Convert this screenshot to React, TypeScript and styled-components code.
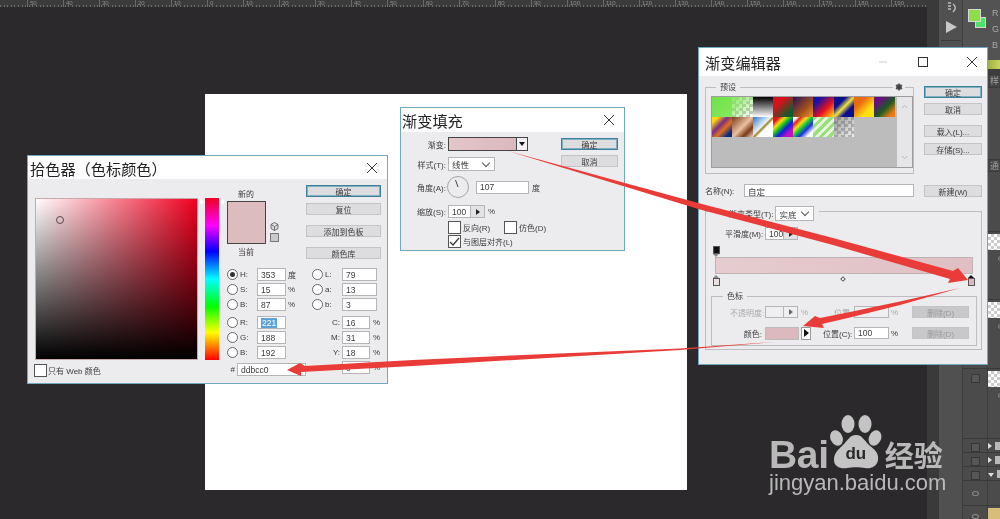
import React from 'react';
import styled, { createGlobalStyle } from 'styled-components';
import { ChevronDown, ChevronUp, Settings } from 'lucide-react';

const GlobalStyle = createGlobalStyle`
  html, body { margin: 0; padding: 0; background: #2b292b; }
  body { width: 1000px; height: 519px; overflow: hidden; font-family: "Liberation Sans", "Noto Sans CJK SC", sans-serif; }
  * { box-sizing: border-box; }
`;

const Screen = styled.div`
  position: relative;
  display: flex;
  width: 1000px;
  height: 519px;
  overflow: hidden;
  background: #2b292b;
  color: #3c3a3c;
  font-size: 8px;
  filter: blur(.35px);
`;

const Workspace = styled.div`
  flex: none;
  width: 927px;
`;

const Ruler = styled.div`
  display: flex;
  height: 7px;
  padding-left: 27px;
  background-color: #3c3b3c;
  background-image: repeating-linear-gradient(90deg, #6a6a6a 0 1px, transparent 1px 3.6px);
  background-size: 100% 2px;
  background-position: 0 100%;
  background-repeat: no-repeat;
`;

const RulerCell = styled.div`
  flex: none;
  width: 36px;
  padding-left: 2px;
  border-left: 1px solid #6a6a6a;
  color: #8d8d8d;
  font-size: 6px;
  line-height: 6px;
`;

const Gutter = styled.div`
  flex: none;
  width: 12px;
  background: #3b3a3b;
`;

const ToolStrip = styled.div`
  flex: none;
  width: 24px;
  display: flex;
  flex-direction: column;
  align-items: center;
  gap: 6px;
  padding-top: 2px;
  background: #505050;
  border-right: 1px solid #3d3d3d;
`;

const StripDivider = styled.div`
  width: 20px;
  height: 1px;
  background: #3d3d3d;
`;

const SidePanel = styled.div`
  flex: 1;
  display: flex;
  flex-direction: column;
  background: #4b4b4b;
  overflow: hidden;
`;

const ColorPanel = styled.div`
  position: relative;
  flex: none;
  height: 60px;
  background: #535353;
`;

const ChannelLabel = styled.span<{ $top: number }>`
  position: absolute;
  left: 29px;
  top: ${p => p.$top}px;
  color: #a8a8a8;
  font-size: 9px;
`;

const ColorChip = styled.div<{ $bg: string; $left: number; $top: number; $size: number; $z: number }>`
  position: absolute;
  left: ${p => p.$left}px;
  top: ${p => p.$top}px;
  width: ${p => p.$size}px;
  height: ${p => p.$size}px;
  background: ${p => p.$bg};
  border: 1px solid #d8d8d8;
  z-index: ${p => p.$z};
`;

const Spectrum = styled.div`
  flex: none;
  height: 9px;
  background: linear-gradient(90deg, #44601a, #c9d75a);
`;

const PanelRow = styled.div<{ $h: number; $bg?: string }>`
  flex: none;
  height: ${p => p.$h}px;
  display: flex;
  align-items: flex-start;
  background: ${p => p.$bg || '#4b4b4b'};
  border-bottom: 1px solid #3a3a3a;
  color: #b5b5b5;
`;

const TabText = styled.span`
  margin-left: 27px;
  color: #a0a0a0;
  font-size: 9px;
  line-height: 12px;
`;

const VisCell = styled.div<{ $pad?: number }>`
  flex: none;
  width: 25px;
  height: 100%;
  display: flex;
  justify-content: center;
  padding-top: ${p => p.$pad ?? 4}px;
  border-right: 1px solid #3e3e3e;
`;

const VisBox = styled.div`
  width: 9px;
  height: 9px;
  border: 1px solid #363636;
  background: #565656;
`;

const Eye = styled.div`
  width: 7px;
  height: 5px;
  border-radius: 50%;
  border: 1px solid #8a8a8a;
`;

const ThumbStack = styled.div`
  flex: none;
  display: flex;
  flex-direction: column;
`;

const Thumb = styled.div<{ $fill?: string }>`
  width: 20px;
  height: 16px;
  margin-top: 2px;
  background-color: ${p => p.$fill || '#fff'};
  background-image: ${p => (p.$fill ? 'none' : 'conic-gradient(#ccc 25%, #fff 0 50%, #ccc 0 75%, #fff 0)')};
  background-size: 6px 6px;
`;

const ThumbEye = styled(Eye)`
  margin: 6px 0 0 10px;
`;

const Fold = styled.span<{ $open?: boolean }>`
  width: 0;
  height: 0;
  ${p => p.$open
    ? 'border-left: 3px solid transparent; border-right: 3px solid transparent; border-top: 4px solid #ddd; margin: 6px 0 0 0;'
    : 'border-top: 3px solid transparent; border-bottom: 3px solid transparent; border-left: 4px solid #ddd; margin: 4px 0 0 0;'}
`;

const Folder = styled.span`
  width: 7px;
  height: 8px;
  margin: 3px 0 0 3px;
  background: #b9b9b9;
`;

const Desktop = styled.div`
  position: absolute;
  inset: 0;
`;

const Canvas = styled.div`
  position: absolute;
  left: 205px;
  top: 94px;
  width: 482px;
  height: 396px;
  background: #fff;
`;

const Win = styled.div<{ $x: number; $y: number; $w: number; $h: number }>`
  position: absolute;
  left: ${p => p.$x}px;
  top: ${p => p.$y}px;
  width: ${p => p.$w}px;
  height: ${p => p.$h}px;
  display: flex;
  flex-direction: column;
  background: #ecebed;
  border: 1px solid #6fa9bd;
`;

const TitleBar = styled.div<{ $h: number }>`
  flex: none;
  height: ${p => p.$h}px;
  display: flex;
  align-items: center;
  background: #fff;
  padding-right: 10px;
`;

const TitleText = styled.div<{ $pad: number }>`
  flex: 1;
  padding-left: ${p => p.$pad}px;
  font-size: 15.2px;
  color: #222;
  white-space: nowrap;
`;

const WinGlyph = styled.svg<{ $mr?: number }>`
  display: block;
  flex: none;
  margin-right: ${p => p.$mr || 0}px;
`;

const Btn = styled.div<{ $w: number; $primary?: boolean; $mt?: number; $off?: boolean }>`
  flex: none;
  width: ${p => p.$w}px;
  height: 12px;
  margin-top: ${p => p.$mt || 0}px;
  display: flex;
  align-items: center;
  justify-content: center;
  background: ${p => (p.$off ? '#c8c7c9' : '#dddcde')};
  border: 1px solid ${p => (p.$primary ? '#3f7f9c' : '#c4c3c5')};
  box-shadow: ${p => (p.$primary ? 'inset 0 0 0 1px #7fb0c4' : 'none')};
  color: ${p => (p.$off ? '#9a999b' : '#3c3a3c')};
  font-size: 8px;
  white-space: nowrap;
`;

const Input = styled.div<{ $w: number; $h?: number; $off?: boolean; $ml?: number }>`
  flex: none;
  width: ${p => p.$w}px;
  height: ${p => p.$h || 13}px;
  margin-left: ${p => p.$ml || 0}px;
  padding-left: 3px;
  display: flex;
  align-items: center;
  background: ${p => (p.$off ? '#efeef0' : '#fff')};
  border: 1px solid #b5b4b6;
  font-size: 8.5px;
  color: #3c3a3c;
  white-space: nowrap;
  overflow: hidden;
`;

const Stepper = styled.div<{ $h?: number; $off?: boolean }>`
  flex: none;
  width: 14px;
  height: ${p => p.$h || 13}px;
  display: flex;
  align-items: center;
  justify-content: center;
  background: ${p => (p.$off ? '#efeef0' : '#e2e1e3')};
  border: 1px solid #b5b4b6;
  border-left: none;
  &::after {
    content: '';
    border-top: 3px solid transparent;
    border-bottom: 3px solid transparent;
    border-left: 4px solid ${p => (p.$off ? '#666' : '#222')};
  }
`;

const Select = styled(Input)`
  justify-content: space-between;
  padding-right: 5px;
  &::after {
    content: '';
    width: 5px;
    height: 5px;
    margin-top: -3px;
    border-right: 1px solid #555;
    border-bottom: 1px solid #555;
    transform: rotate(45deg);
  }
`;

const Label = styled.div<{ $w?: number; $right?: boolean; $off?: boolean; $ml?: number }>`
  flex: none;
  ${p => (p.$w ? `width: ${p.$w}px;` : '')}
  margin-left: ${p => p.$ml || 0}px;
  text-align: ${p => (p.$right ? 'right' : 'left')};
  color: ${p => (p.$off ? '#a9a8aa' : '#3c3a3c')};
  font-size: 8px;
  white-space: nowrap;
`;

const Check = styled.div<{ $ml?: number }>`
  flex: none;
  width: 13px;
  height: 13px;
  margin-left: ${p => p.$ml || 0}px;
  background: #fff;
  border: 1px solid #555;
  display: flex;
  align-items: center;
  justify-content: center;
`;

/* colour picker */
const PickerBody = styled.div`
  flex: 1;
  display: flex;
  padding: 6px 0 0 7px;
`;

const FieldColumn = styled.div`
  flex: none;
  width: 163px;
  padding-top: 13px;
`;

const ColorField = styled.div`
  position: relative;
  width: 163px;
  height: 162px;
  border: 1px solid #c9a8ac;
  background:
    linear-gradient(to top, #000, rgba(0, 0, 0, 0)),
    linear-gradient(to right, #fff, #f0001f);
`;

const PickRing = styled.div`
  position: absolute;
  left: 20px;
  top: 17px;
  width: 8px;
  height: 8px;
  border-radius: 50%;
  border: 1px solid #5a4a4c;
`;

const WebRow = styled.div`
  display: flex;
  align-items: center;
  gap: 1px;
  margin: 4px 0 0 -1px;
`;

const HueColumn = styled.div`
  position: relative;
  flex: none;
  margin: 13px 0 0 7px;
  width: 14px;
  height: 162px;
  background: linear-gradient(to bottom, #f0001f 0%, #ff00ff 17%, #0000ff 33%, #00ffff 50%, #00ff00 67%, #ffff00 83%, #ff0000 100%);
  &::before, &::after {
    content: '';
    position: absolute;
    top: 1px;
    border-top: 3px solid transparent;
    border-bottom: 3px solid transparent;
  }
  &::before { left: -5px; border-left: 4px solid #fff; }
  &::after { right: -5px; border-right: 4px solid #fff; }
`;

const RightColumn = styled.div`
  flex: 1;
  margin-left: 7px;
  display: flex;
  flex-direction: column;
`;

const TopArea = styled.div`
  flex: none;
  height: 81px;
  display: flex;
`;

const SwatchColumn = styled.div`
  flex: none;
  width: 40px;
  display: flex;
  flex-direction: column;
  align-items: center;
  padding-top: 3px;
`;

const ColorSwatch = styled.div`
  width: 39px;
  height: 43px;
  margin: 2px 0;
  background: #ddbcc0;
  border: 1px solid #444;
`;

const GamutColumn = styled.div`
  flex: none;
  width: 40px;
  padding: 37px 0 0 4px;
`;

const WebSwatch = styled.div`
  width: 9px;
  height: 9px;
  margin-top: 2px;
  background: #c9c8ca;
  border: 1px solid #777;
`;

const ButtonColumn = styled.div`
  display: flex;
  flex-direction: column;
  align-items: flex-start;
`;

const ValueGrid = styled.div`
  display: grid;
  grid-template-columns: 85px 70px;
`;

const ValueColumn = styled.div`
  display: flex;
  flex-direction: column;
`;

const ValueRow = styled.div<{ $mt?: number }>`
  display: flex;
  align-items: center;
  height: 13px;
  margin-top: ${p => p.$mt ?? 2}px;
`;

const Radio = styled.div<{ $on?: boolean }>`
  flex: none;
  width: 11px;
  height: 11px;
  margin-left: 1px;
  border-radius: 50%;
  background: #fff;
  border: 1px solid #666;
  display: flex;
  align-items: center;
  justify-content: center;
  &::after {
    content: '';
    width: 5px;
    height: 5px;
    border-radius: 50%;
    background: ${p => (p.$on ? '#333' : 'transparent')};
  }
`;

const Selected = styled.span`
  background: #5aa2dc;
  color: #fff;
  padding: 0 1px;
`;

/* gradient fill */
const FillBody = styled.div`
  flex: 1;
  display: flex;
  padding: 5px 6px 0 0;
`;

const FillForm = styled.div`
  flex: 1;
  display: flex;
  flex-direction: column;
`;

const FormRow = styled.div<{ $mt?: number; $h?: number; $indent?: number }>`
  display: flex;
  align-items: center;
  height: ${p => p.$h || 13}px;
  margin-top: ${p => p.$mt || 0}px;
  padding-left: ${p => p.$indent || 0}px;
`;

const GradientChip = styled.div`
  flex: none;
  width: 69px;
  height: 14px;
  margin-left: 2px;
  background: linear-gradient(90deg, #e2c6ca, #dcb8bd);
  border: 1px solid #444;
`;

const ChipMenu = styled.div`
  flex: none;
  width: 11px;
  height: 14px;
  background: #f2f1f3;
  border: 1px solid #444;
  border-left: none;
  display: flex;
  align-items: center;
  justify-content: center;
  &::after {
    content: '';
    border-left: 3px solid transparent;
    border-right: 3px solid transparent;
    border-top: 4px solid #111;
  }
`;

const Dial = styled.svg`
  flex: none;
  display: block;
  margin-right: 6px;
`;

const SideButtons = styled.div`
  flex: none;
  display: flex;
  flex-direction: column;
  align-items: flex-start;
  padding-top: 1px;
`;

/* gradient editor */
const EditorBody = styled.div`
  flex: 1;
  display: flex;
  flex-direction: column;
  padding: 11px 6px 0 6px;
`;

const EditorTop = styled.div`
  display: flex;
  gap: 10px;
`;

const PresetFrame = styled.div`
  position: relative;
  width: 209px;
  height: 87px;
  border: 1px solid #bdbcbe;
`;

const Legend = styled.div<{ $x: number }>`
  position: absolute;
  left: ${p => p.$x}px;
  top: -6px;
  padding: 0 4px;
  background: #ecebed;
  font-size: 8px;
  line-height: 11px;
  white-space: nowrap;
`;

const Gear = styled.div`
  position: absolute;
  right: 8px;
  top: -5px;
  display: flex;
  padding: 0 2px;
  background: #ecebed;
  color: #444;
`;

const PresetInner = styled.div`
  display: flex;
  margin: 8px 0 0 5px;
  height: 72px;
  border: 1px solid #9c9b9d;
`;

const PresetGrid = styled.div`
  flex: none;
  width: 185px;
  height: 70px;
  display: grid;
  grid-template-columns: repeat(9, 20.3px);
  grid-auto-rows: 20px;
  align-content: start;
  background: #bdbcbd;
`;

const Preset = styled.div<{ $bg: string }>`
  background: ${p => p.$bg};
  background-size: ${p => (p.$bg.includes('conic') ? '100% 100%, 7px 7px' : 'auto')};
`;

const ScrollTrack = styled.div`
  flex: 1;
  display: flex;
  flex-direction: column;
  justify-content: space-between;
  align-items: center;
  padding: 5px 0;
  background: #e6e5e7;
  color: #aaa;
`;

const EditorSide = styled.div`
  display: flex;
  flex-direction: column;
  margin-top: -1px;
`;

const NameRow = styled.div`
  display: flex;
  align-items: center;
  margin-top: 10px;
`;

const TypeFrame = styled.div`
  position: relative;
  margin-top: 14px;
  width: 277px;
  height: 139px;
  border: 1px solid #bdbcbe;
`;

const TypeLegend = styled.div`
  position: absolute;
  left: 23px;
  top: -6px;
  display: flex;
  align-items: center;
  gap: 0;
  padding-right: 5px;
  background: #ecebed;
`;

const SmoothRow = styled.div`
  display: flex;
  align-items: center;
  margin: 15px 0 0 19px;
`;

const StopTrack = styled.div`
  position: relative;
  margin: 6px 8px 0 9px;
  height: 40px;
`;

const GradientBar = styled.div`
  position: absolute;
  left: 0;
  right: 0;
  top: 11px;
  height: 17px;
  background: linear-gradient(90deg, #e6ccd0, #dfbfc4);
  border: 1px solid #bdb3b5;
`;

const Stop = styled.div<{ $at: string; $top: number; $fill: string; $mark?: string; $up?: boolean }>`
  position: absolute;
  ${p => p.$at};
  top: ${p => p.$top}px;
  width: 7px;
  height: 8px;
  background: ${p => p.$fill};
  border: 1px solid #555;
  &::before {
    content: '';
    position: absolute;
    left: -1px;
    ${p => (p.$up ? 'bottom: -4px; border-top: 3px solid #888;' : `top: -4px; border-bottom: 3px solid ${p.$mark || '#888'};`)}
    border-left: 3.5px solid transparent;
    border-right: 3.5px solid transparent;
  }
`;

const MidPoint = styled.div`
  position: absolute;
  left: 126px;
  top: 31px;
  width: 4px;
  height: 4px;
  border: 1px solid #555;
  background: #fff;
  transform: rotate(45deg);
`;

const StopsFrame = styled.div`
  position: relative;
  margin: 10px 4px 0 5px;
  height: 50px;
  border: 1px solid #bdbcbe;
  padding: 9px 0 0 18px;
`;

const StopRow = styled.div<{ $mt?: number }>`
  display: flex;
  align-items: center;
  height: 12px;
  margin-top: ${p => p.$mt || 0}px;
`;

const ColorWell = styled.div`
  flex: none;
  width: 34px;
  height: 13px;
  margin-left: 3px;
  background: #dcb9be;
  border: 1px solid #bbb;
`;

const WellMenu = styled.div`
  flex: none;
  width: 10px;
  height: 13px;
  margin-left: 2px;
  background: #fff;
  border: 1px solid #999;
  display: flex;
  align-items: center;
  justify-content: center;
  &::after {
    content: '';
    border-top: 4px solid transparent;
    border-bottom: 4px solid transparent;
    border-left: 5px solid #111;
  }
`;

/* overlays */
const Arrows = styled.svg`
  position: absolute;
  left: 0;
  top: 0;
  width: 1000px;
  height: 519px;
  pointer-events: none;
`;

const Watermark = styled.div`
  position: absolute;
  left: 769px;
  top: 412px;
  width: 190px;
  color: rgba(196, 196, 196, .92);
`;

const BrandRow = styled.div`
  display: flex;
  align-items: flex-end;
  height: 58px;
`;

const BrandLatin = styled.div`
  font-weight: 700;
  font-size: 39px;
  line-height: 30px;
  letter-spacing: -.3px;
`;

const Paw = styled.div`
  position: relative;
  flex: none;
  width: 54px;
  height: 58px;
`;

const PawText = styled.div`
  position: absolute;
  left: 13px;
  top: 33px;
  width: 28px;
  text-align: center;
  color: #2b292b;
  font-weight: 700;
  font-size: 17px;
  line-height: 18px;
`;

const BrandCn = styled.div`
  margin-left: 2px;
  font-family: "Noto Sans CJK SC", sans-serif;
  font-weight: 700;
  font-size: 29px;
  line-height: 32px;
`;

const BrandUrl = styled.div`
  margin-top: 2px;
  font-size: 22px;
  line-height: 22px;
  white-space: nowrap;
`;

const checker = 'conic-gradient(#c4c4c4 25%, #fff 0 50%, #c4c4c4 0 75%, #fff 0)';

const presets = [
  'linear-gradient(135deg, #6fe04a, #86ea5c)',
  `linear-gradient(135deg, rgba(130,230,90,.95), rgba(130,230,90,0)), ${checker}`,
  'linear-gradient(180deg, #000, #fff)',
  'linear-gradient(135deg, #d8101c 30%, #15592c 80%)',
  'linear-gradient(135deg, #2a0f5e, #a0501a 60%, #f09a30)',
  'linear-gradient(135deg, #1810a8 20%, #e8101c 60%, #ffe810)',
  'linear-gradient(135deg, #0a0f90 30%, #f0e040 50%, #0a0f90 70%)',
  'linear-gradient(135deg, #ea6a10 30%, #ffe210 70%)',
  'linear-gradient(135deg, #6a0f80 20%, #1a5a20 55%, #f07a10 85%)',
  'linear-gradient(135deg, #ffd410 15%, #7a2f80 40%, #e07020 60%, #0a2a80 85%)',
  'linear-gradient(135deg, #7a3a18, #eac0a0 50%, #7a3a18 75%, #e8d8c8)',
  'linear-gradient(135deg, #2a78c8, #e8f0f8 45%, #a08020 52%, #fff 60%)',
  'linear-gradient(135deg, #e8101c 15%, #f0e010 30%, #10c020 45%, #1020e0 60%, #c010c0 80%)',
  'linear-gradient(135deg, #fff 10%, #e82020 20%, #f0e010 35%, #10c040 50%, #2030e0 65%, #fff 85%)',
  'repeating-linear-gradient(135deg, #9adf78 0 3px, #e4f4dc 3px 6px)',
  `linear-gradient(135deg, rgba(90,90,90,.6), rgba(90,90,90,.1)), ${checker}`,
];

const rulerMarks = [50, 40, 30, 20, 10, 0, 10, 20, 30, 40, 50, 60, 70, 80, 90, 100, 110, 120, 130, 140, 150, 160, 170, 180, 190];

const Close = () => (
  <WinGlyph width={10} height={10} viewBox="0 0 10 10">
    <path d="M0 0L10 10M10 0L0 10" stroke="#333" strokeWidth="1" />
  </WinGlyph>
);

const Tick = () => (
  <svg width="11" height="11" viewBox="0 0 11 11">
    <path d="M1 6L4 9L10 2" stroke="#333" strokeWidth="1.2" fill="none" />
  </svg>
);

const ColorPicker = () => (
  <Win $x={27} $y={155} $w={361} $h={229}>
    <TitleBar $h={23}>
      <TitleText $pad={2}>拾色器（色标颜色）</TitleText>
      <Close />
    </TitleBar>
    <PickerBody>
      <FieldColumn>
        <ColorField><PickRing /></ColorField>
        <WebRow>
          <Check />
          <Label>只有 Web 颜色</Label>
        </WebRow>
      </FieldColumn>
      <HueColumn />
      <RightColumn>
        <TopArea>
          <SwatchColumn>
            <Label>新的</Label>
            <ColorSwatch />
            <Label>当前</Label>
          </SwatchColumn>
          <GamutColumn>
            <svg width="9" height="9" viewBox="0 0 9 9" style={{ display: 'block' }}>
              <path d="M4.5.5L8 2.5V6.5L4.5 8.5L1 6.5V2.5ZM1 2.5L4.5 4.5L8 2.5M4.5 4.5V8.5" stroke="#555" fill="#ddd" strokeWidth=".8" />
            </svg>
            <WebSwatch />
          </GamutColumn>
          <ButtonColumn>
            <Btn $w={75} $primary>确定</Btn>
            <Btn $w={75} $mt={6}>复位</Btn>
            <Btn $w={75} $mt={10}>添加到色板</Btn>
            <Btn $w={75} $mt={10}>颜色库</Btn>
          </ButtonColumn>
        </TopArea>
        <ValueGrid>
          <ValueColumn>
            {[['H:', '353', '度'], ['S:', '15', '%'], ['B:', '87', '%']].map(([k, v, u], i) => (
              <ValueRow key={k}>
                <Radio $on={i === 0} />
                <Label $w={17} $ml={2}>{k}</Label>
                <Input $w={29}>{v}</Input>
                <Label $ml={2}>{u}</Label>
              </ValueRow>
            ))}
            <ValueRow $mt={5}>
              <Radio />
              <Label $w={17} $ml={2}>R:</Label>
              <Input $w={29}><Selected>221</Selected></Input>
            </ValueRow>
            {[['G:', '188'], ['B:', '192']].map(([k, v]) => (
              <ValueRow key={k}>
                <Radio />
                <Label $w={17} $ml={2}>{k}</Label>
                <Input $w={29}>{v}</Input>
              </ValueRow>
            ))}
            <ValueRow $mt={4}>
              <Label $w={9} $right>#</Label>
              <Input $w={69} $ml={2}>ddbcc0</Input>
            </ValueRow>
          </ValueColumn>
          <ValueColumn>
            {[['L:', '79'], ['a:', '13'], ['b:', '3']].map(([k, v]) => (
              <ValueRow key={k}>
                <Radio />
                <Label $w={17} $ml={2}>{k}</Label>
                <Input $w={35}>{v}</Input>
              </ValueRow>
            ))}
            {[['C:', '16'], ['M:', '31'], ['Y:', '18'], ['K:', '0']].map(([k, v], i) => (
              <ValueRow key={k} $mt={i === 0 ? 5 : 2}>
                <Label $w={29} $right>{k}</Label>
                <Input $w={28} $ml={2}>{v}</Input>
                <Label $ml={3}>%</Label>
              </ValueRow>
            ))}
          </ValueColumn>
        </ValueGrid>
      </RightColumn>
    </PickerBody>
  </Win>
);

const GradientFill = () => (
  <Win $x={400} $y={107} $w={225} $h={144}>
    <TitleBar $h={24}>
      <TitleText $pad={1}>渐变填充</TitleText>
      <Close />
    </TitleBar>
    <FillBody>
      <FillForm>
        <FormRow $h={14}>
          <Label $w={45} $right>渐变:</Label>
          <GradientChip />
          <ChipMenu />
        </FormRow>
        <FormRow $mt={6} $h={14}>
          <Label $w={45} $right>样式(T):</Label>
          <Select $w={47} $h={14} $ml={2}>线性</Select>
        </FormRow>
        <FormRow $mt={5} $h={22}>
          <Label $w={45} $right>角度(A):</Label>
          <Dial width="24" height="24" viewBox="0 0 24 24">
            <circle cx="12" cy="12" r="10.5" fill="#ecebed" stroke="#a5a4a6" />
            <path d="M12 12L9.5 5" stroke="#444" strokeWidth="1" />
          </Dial>
          <Input $w={53}>107</Input>
          <Label $ml={3}>度</Label>
        </FormRow>
        <FormRow $mt={7}>
          <Label $w={45} $right>缩放(S):</Label>
          <Input $w={23} $ml={2}>100</Input>
          <Stepper />
          <Label $ml={3}>%</Label>
        </FormRow>
        <FormRow $mt={3} $indent={47}>
          <Check />
          <Label $w={41} $ml={2}>反向(R)</Label>
          <Check />
          <Label $ml={2}>仿色(D)</Label>
        </FormRow>
        <FormRow $mt={1} $indent={47}>
          <Check><Tick /></Check>
          <Label $ml={2}>与图层对齐(L)</Label>
        </FormRow>
      </FillForm>
      <SideButtons>
        <Btn $w={57} $primary>确定</Btn>
        <Btn $w={57} $mt={5}>取消</Btn>
      </SideButtons>
    </FillBody>
  </Win>
);

const GradientEditor = () => (
  <Win $x={698} $y={47} $w={290} $h={318}>
    <TitleBar $h={28}>
      <TitleText $pad={6}>渐变编辑器</TitleText>
      <WinGlyph width="8" height="2" viewBox="0 0 8 2" $mr={31}>
        <path d="M0 1H8" stroke="#ccc" />
      </WinGlyph>
      <WinGlyph width="10" height="10" viewBox="0 0 10 10" $mr={39}>
        <rect x=".5" y=".5" width="9" height="9" fill="none" stroke="#333" />
      </WinGlyph>
      <Close />
    </TitleBar>
    <EditorBody>
      <EditorTop>
        <div>
          <PresetFrame>
            <Legend $x={10}>预设</Legend>
            <Gear><Settings size={8} fill="#444" strokeWidth={2} /></Gear>
            <PresetInner>
              <PresetGrid>
                {presets.map((bg, i) => <Preset key={i} $bg={bg} />)}
              </PresetGrid>
              <ScrollTrack>
                <ChevronUp size={9} />
                <ChevronDown size={9} />
              </ScrollTrack>
            </PresetInner>
          </PresetFrame>
          <NameRow>
            <Label $w={39}>名称(N):</Label>
            <Input $w={170}>自定</Input>
          </NameRow>
        </div>
        <EditorSide>
          <Btn $w={58} $primary>确定</Btn>
          <Btn $w={58} $mt={5}>取消</Btn>
          <Btn $w={58} $mt={10}>载入(L)...</Btn>
          <Btn $w={58} $mt={6}>存储(S)...</Btn>
          <Btn $w={58} $mt={30}>新建(W)</Btn>
        </EditorSide>
      </EditorTop>
      <TypeFrame>
        <TypeLegend>
          <Label>渐变类型(T):</Label>
          <Select $w={39} $h={15} $ml={2}>实底</Select>
        </TypeLegend>
        <SmoothRow>
          <Label $w={40}>平滑度(M):</Label>
          <Input $w={19}>100</Input>
          <Stepper />
          <Label $ml={3}>%</Label>
        </SmoothRow>
        <StopTrack>
          <Stop $at="left: -2px" $top={0} $fill="#111" $up />
          <GradientBar />
          <Stop $at="left: -2px" $top={32} $fill="#e9e0e1" />
          <Stop $at="right: -2px" $top={32} $fill="#dcb8be" $mark="#111" />
          <MidPoint />
        </StopTrack>
        <StopsFrame>
          <Legend $x={11}>色标</Legend>
          <StopRow>
            <Label $w={32} $off>不透明度:</Label>
            <Input $w={19} $h={12} $ml={3} $off />
            <Stepper $off $h={12} />
            <Label $ml={3} $w={33} $off>%</Label>
            <Label $w={20} $off>位置:</Label>
            <Input $w={35} $h={12} $off />
            <Label $ml={2} $w={21} $off>%</Label>
            <Btn $w={57} $off>删除(D)</Btn>
          </StopRow>
          <StopRow $mt={9}>
            <Label $w={32} $right>颜色:</Label>
            <ColorWell />
            <WellMenu />
            <Label $ml={12} $w={31}>位置(C):</Label>
            <Input $w={35} $h={12}>100</Input>
            <Label $ml={2} $w={21}>%</Label>
            <Btn $w={57} $off>删除(D)</Btn>
          </StopRow>
        </StopsFrame>
      </TypeFrame>
    </EditorBody>
  </Win>
);

const ArrowLayer = () => (
  <Arrows viewBox="0 0 1000 519">
    <g fill="#e93c38">
      <polygon points="508,151 700,203.5 833,238 953,271 958,268 968,280 948,283 950,279 833,245 700,209.5" />
      <polygon points="960,288 900,301.5 850,312 820,318 815,316 803,326 824,328 822,324 850,317.5 900,305" />
      <polygon points="775,342 680,348.5 547,354 413,360 305,366 300,363 287,370 301,376 301,372 413,366 547,358 680,350" />
    </g>
  </Arrows>
);

const Logo = () => (
  <Watermark>
    <BrandRow>
      <BrandLatin>Bai</BrandLatin>
      <Paw>
        <svg width="54" height="58" viewBox="0 0 54 58" style={{ display: 'block' }}>
          <g fill="#c4c4c4">
            <ellipse cx="19" cy="12" rx="6.5" ry="9" />
            <ellipse cx="36" cy="12" rx="6.5" ry="9" />
            <ellipse cx="7.5" cy="26" rx="6" ry="8" transform="rotate(-25 7.5 26)" />
            <ellipse cx="46" cy="26" rx="6" ry="8" transform="rotate(25 46 26)" />
            <path d="M27 23C33 23 35 28 40 33C46 38 50 41 49 48C48 55 41 57 36 56C31 55 23 55 18 56C12 57 5 55 5 48C5 41 9 38 14 33C19 28 21 23 27 23Z" />
          </g>
        </svg>
        <PawText>du</PawText>
      </Paw>
      <BrandCn>经验</BrandCn>
    </BrandRow>
    <BrandUrl>jingyan.baidu.com</BrandUrl>
  </Watermark>
);

const App: React.FC = () => (
  <Screen>
    <GlobalStyle />
    <Workspace>
      <Ruler>
        {rulerMarks.map((m, i) => <RulerCell key={i}>{m}</RulerCell>)}
      </Ruler>
    </Workspace>
    <Gutter />
    <ToolStrip>
      <svg width="12" height="12" viewBox="0 0 12 12">
        <path d="M3 1H6M3 4H6M3 7H6M8 2C11 4 11 7 8 10" stroke="#bdbdbd" strokeWidth="1.5" fill="none" />
      </svg>
      <svg width="14" height="14" viewBox="0 0 14 14">
        <path d="M2 1L13 7L2 13Z" fill="#c8c8c8" />
      </svg>
      <StripDivider />
      <svg width="12" height="10" viewBox="0 0 12 10">
        <path d="M3 3H9V9H3ZM5 1H7V3H5Z" fill="#bdbdbd" />
      </svg>
    </ToolStrip>
    <SidePanel>
      <ColorPanel>
        <ColorChip $bg="#8be04a" $left={5} $top={9} $size={13} $z={2} />
        <ColorChip $bg="#4fe36a" $left={12} $top={17} $size={11} $z={1} />
        <ChannelLabel $top={8}>R</ChannelLabel>
        <ChannelLabel $top={24}>G</ChannelLabel>
        <ChannelLabel $top={40}>B</ChannelLabel>
      </ColorPanel>
      <Spectrum />
      <PanelRow $h={6} $bg="#3d3d3d" />
      <PanelRow $h={13} $bg="#444"><TabText>样</TabText></PanelRow>
      <PanelRow $h={72} />
      <PanelRow $h={12} $bg="#444"><TabText>通</TabText></PanelRow>
      <PanelRow $h={60} />
      <PanelRow $h={68}>
        <VisCell><VisBox /></VisCell>
        <ThumbStack><Thumb /><ThumbEye /></ThumbStack>
      </PanelRow>
      <PanelRow $h={69}>
        <VisCell><VisBox /></VisCell>
        <ThumbStack><Thumb /><ThumbEye /></ThumbStack>
      </PanelRow>
      <PanelRow $h={70}>
        <VisCell $pad={5}><VisBox /></VisCell>
        <ThumbStack><Thumb /><ThumbEye /></ThumbStack>
      </PanelRow>
      <PanelRow $h={14}>
        <VisCell><VisBox /></VisCell>
        <Fold />
        <Folder />
      </PanelRow>
      <PanelRow $h={14}>
        <VisCell><VisBox /></VisCell>
        <Fold />
        <Folder />
      </PanelRow>
      <PanelRow $h={14}>
        <VisCell><VisBox /></VisCell>
        <Fold $open />
        <Folder />
      </PanelRow>
      <PanelRow $h={25}>
        <VisCell $pad={10}><Eye /></VisCell>
      </PanelRow>
      <PanelRow $h={20}>
        <VisCell $pad={8}><Eye /></VisCell>
        <Thumb $fill="#d8bd7a" />
      </PanelRow>
    </SidePanel>
    <Desktop>
      <Canvas />
      <GradientEditor />
      <GradientFill />
      <ColorPicker />
      <ArrowLayer />
      <Logo />
    </Desktop>
  </Screen>
);

export default App;
